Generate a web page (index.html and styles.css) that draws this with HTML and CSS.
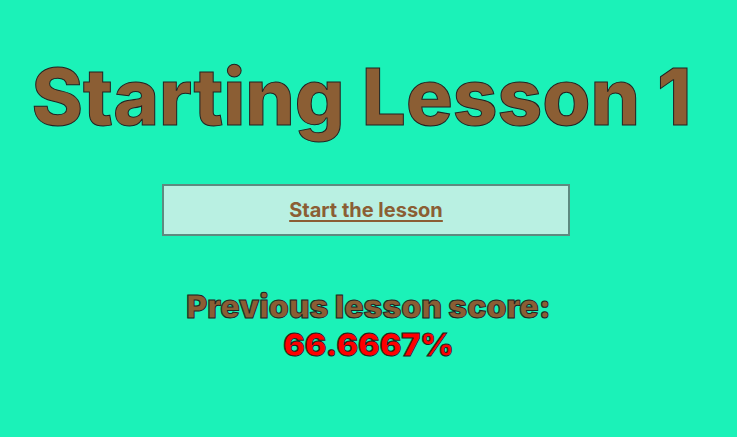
FILE: index.html
```html
<!DOCTYPE html>
<html>
<head>
<meta charset="utf-8">
<link rel="stylesheet" href="styles.css">
</head>
<body>
<main class="page">
  <h1 class="title">Starting Lesson 1</h1>
  <div class="start-box">
    <a class="start-link" href="#">Start the lesson</a>
  </div>
  <div class="score">
    <div class="score-label">Previous lesson score:</div>
    <div class="score-value">66.6667%</div>
  </div>
</main>
</body>
</html>
```
FILE: styles.css
```css
html, body {
  margin: 0;
  padding: 0;
  background: #1bf2b8;
}
body {
  font-family: Inter, "Noto Sans", sans-serif;
  width: 737px;
  height: 437px;
  overflow: hidden;
}
.page {
  display: flex;
  flex-direction: column;
  align-items: center;
  padding-top: 53px;
}
.title {
  margin: 0 14px 0 0;
  font-size: 78px;
  font-weight: 800;
  line-height: 88px;
  color: #8b5e34;
  -webkit-text-stroke: 1px #222;
}
.start-box {
  margin: 43px 5px 0 0;
  width: 404px;
  height: 48px;
  background: #b9f0e2;
  border: 2px solid #5e8a80;
  display: flex;
  align-items: center;
  justify-content: center;
}
.start-link {
  font-size: 20px;
  font-weight: 700;
  color: #8b5e34;
  text-decoration: underline;
  text-underline-offset: 3px;
}
.score {
  margin-top: 52px;
  text-align: center;
  font-weight: 900;
  font-size: 32px;
  line-height: 38px;
  -webkit-text-stroke: 1px #222;
}
.score-label {
  color: #8b5e34;
}
.score-value {
  color: #ff0000;
}
```
